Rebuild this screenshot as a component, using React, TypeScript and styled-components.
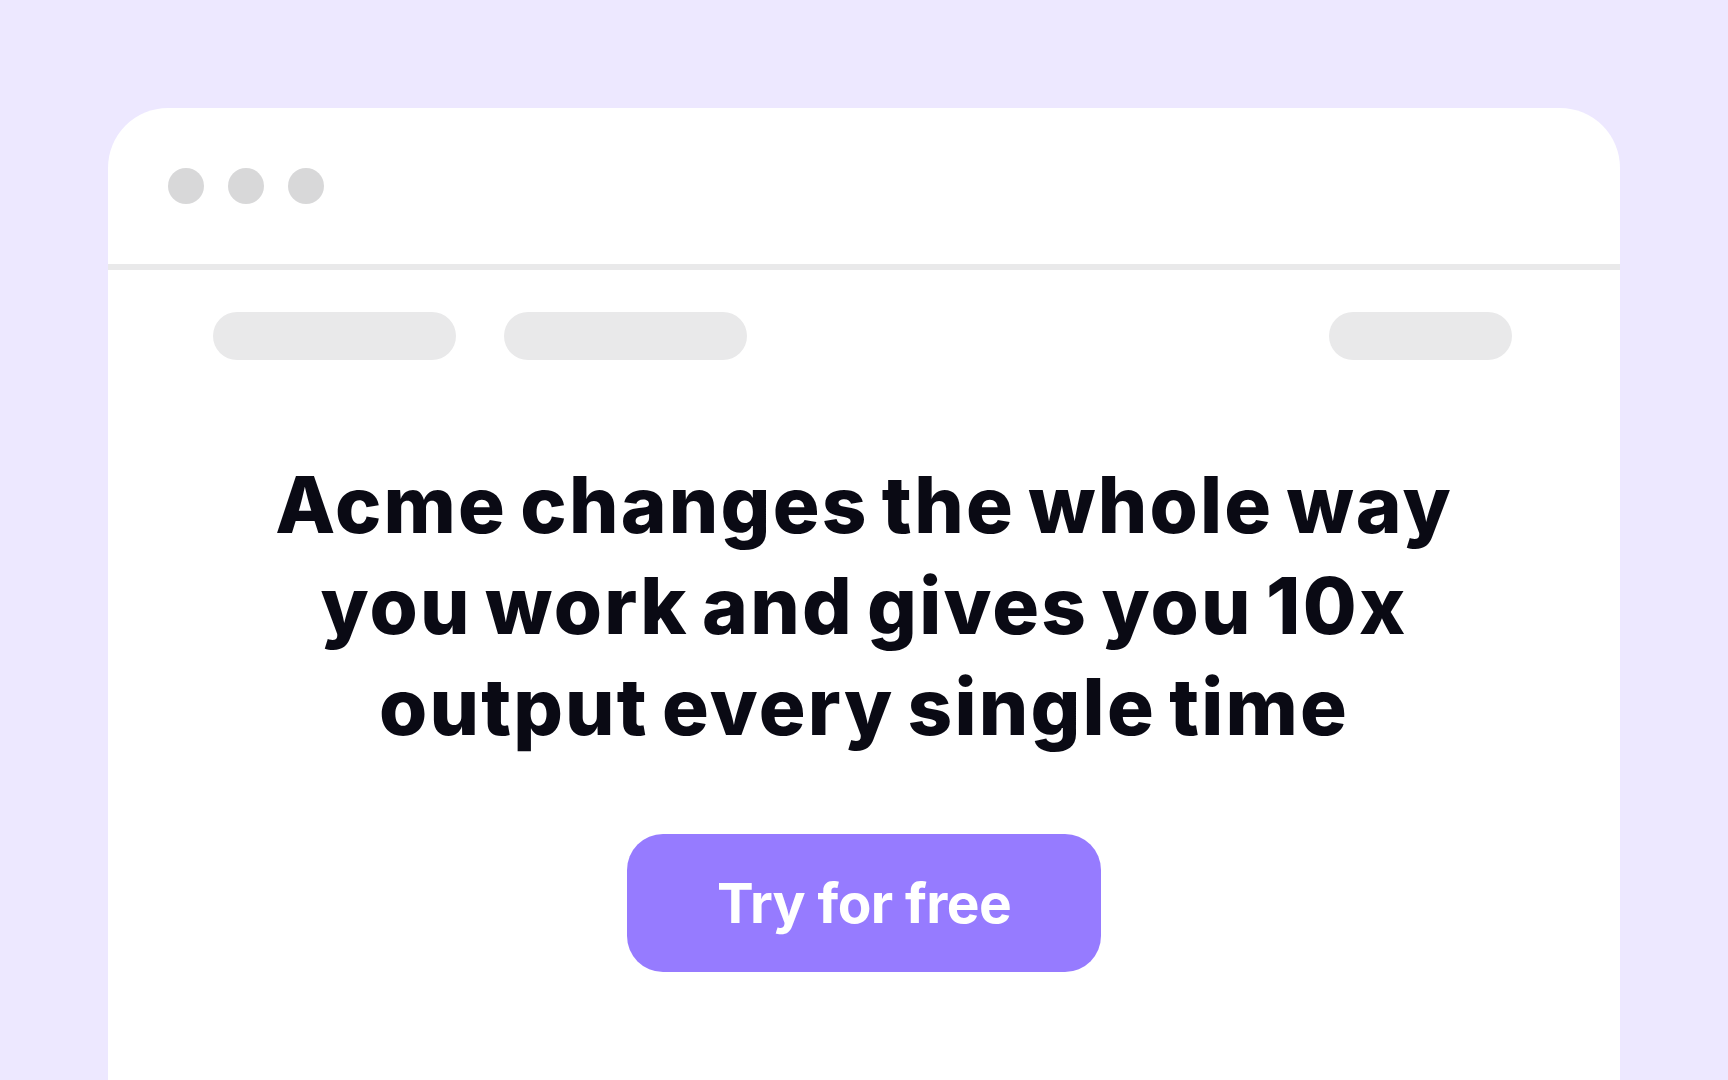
import React from "react";
import styled, { createGlobalStyle } from "styled-components";

const GlobalStyle = createGlobalStyle`
  html, body {
    margin: 0;
    padding: 0;
    height: 100%;
    overflow: hidden;
    background: #ede8ff;
    font-family: Inter, "Noto Sans", sans-serif;
  }
`;

const Page = styled.div`
  min-height: 100vh;
  box-sizing: border-box;
  padding: 108px 108px 0;
  display: flex;
  flex-direction: column;
`;

const Window = styled.div`
  flex: 1;
  background: #ffffff;
  border-radius: 60px 60px 0 0;
  display: flex;
  flex-direction: column;
`;

const TitleBar = styled.div`
  height: 156px;
  display: flex;
  align-items: center;
  gap: 24px;
  padding-left: 60px;
  border-bottom: 6px solid #e9e9ea;
`;

const Dot = styled.span`
  width: 36px;
  height: 36px;
  border-radius: 50%;
  background: #d8d8d9;
`;

const Nav = styled.div`
  display: flex;
  gap: 48px;
  padding: 42px 108px 0 105px;
`;

const Pill = styled.span<{ $w: number; $right?: boolean }>`
  width: ${(p) => p.$w}px;
  height: 48px;
  border-radius: 24px;
  background: #e9e9ea;
  margin-left: ${(p) => (p.$right ? "auto" : "0")};
`;

const Hero = styled.div`
  display: flex;
  flex-direction: column;
  align-items: center;
  padding-top: 94px;
`;

const Headline = styled.h1`
  margin: 0;
  width: 1400px;
  text-align: center;
  font-family: Inter, sans-serif;
  font-weight: 800;
  font-size: 78px;
  line-height: 101px;
  letter-spacing: 2.2px;
  word-spacing: -6px;
  color: #0a0a14;
`;

const Button = styled.button`
  margin-top: 77px;
  width: 474px;
  height: 138px;
  border: none;
  border-radius: 36px;
  background: #967bff;
  color: #ffffff;
  font-family: Inter, sans-serif;
  font-weight: 700;
  font-size: 55px;
  letter-spacing: -0.6px;
  cursor: pointer;
`;

export default function App() {
  return (
    <>
      <GlobalStyle />
      <Page>
        <Window>
          <TitleBar>
            <Dot />
            <Dot />
            <Dot />
          </TitleBar>
          <Nav>
            <Pill $w={243} />
            <Pill $w={243} />
            <Pill $w={183} $right />
          </Nav>
          <Hero>
            <Headline>
              Acme changes the whole way
              <br />
              you work and gives you 10x
              <br />
              output every single time
            </Headline>
            <Button>Try for free</Button>
          </Hero>
        </Window>
      </Page>
    </>
  );
}
